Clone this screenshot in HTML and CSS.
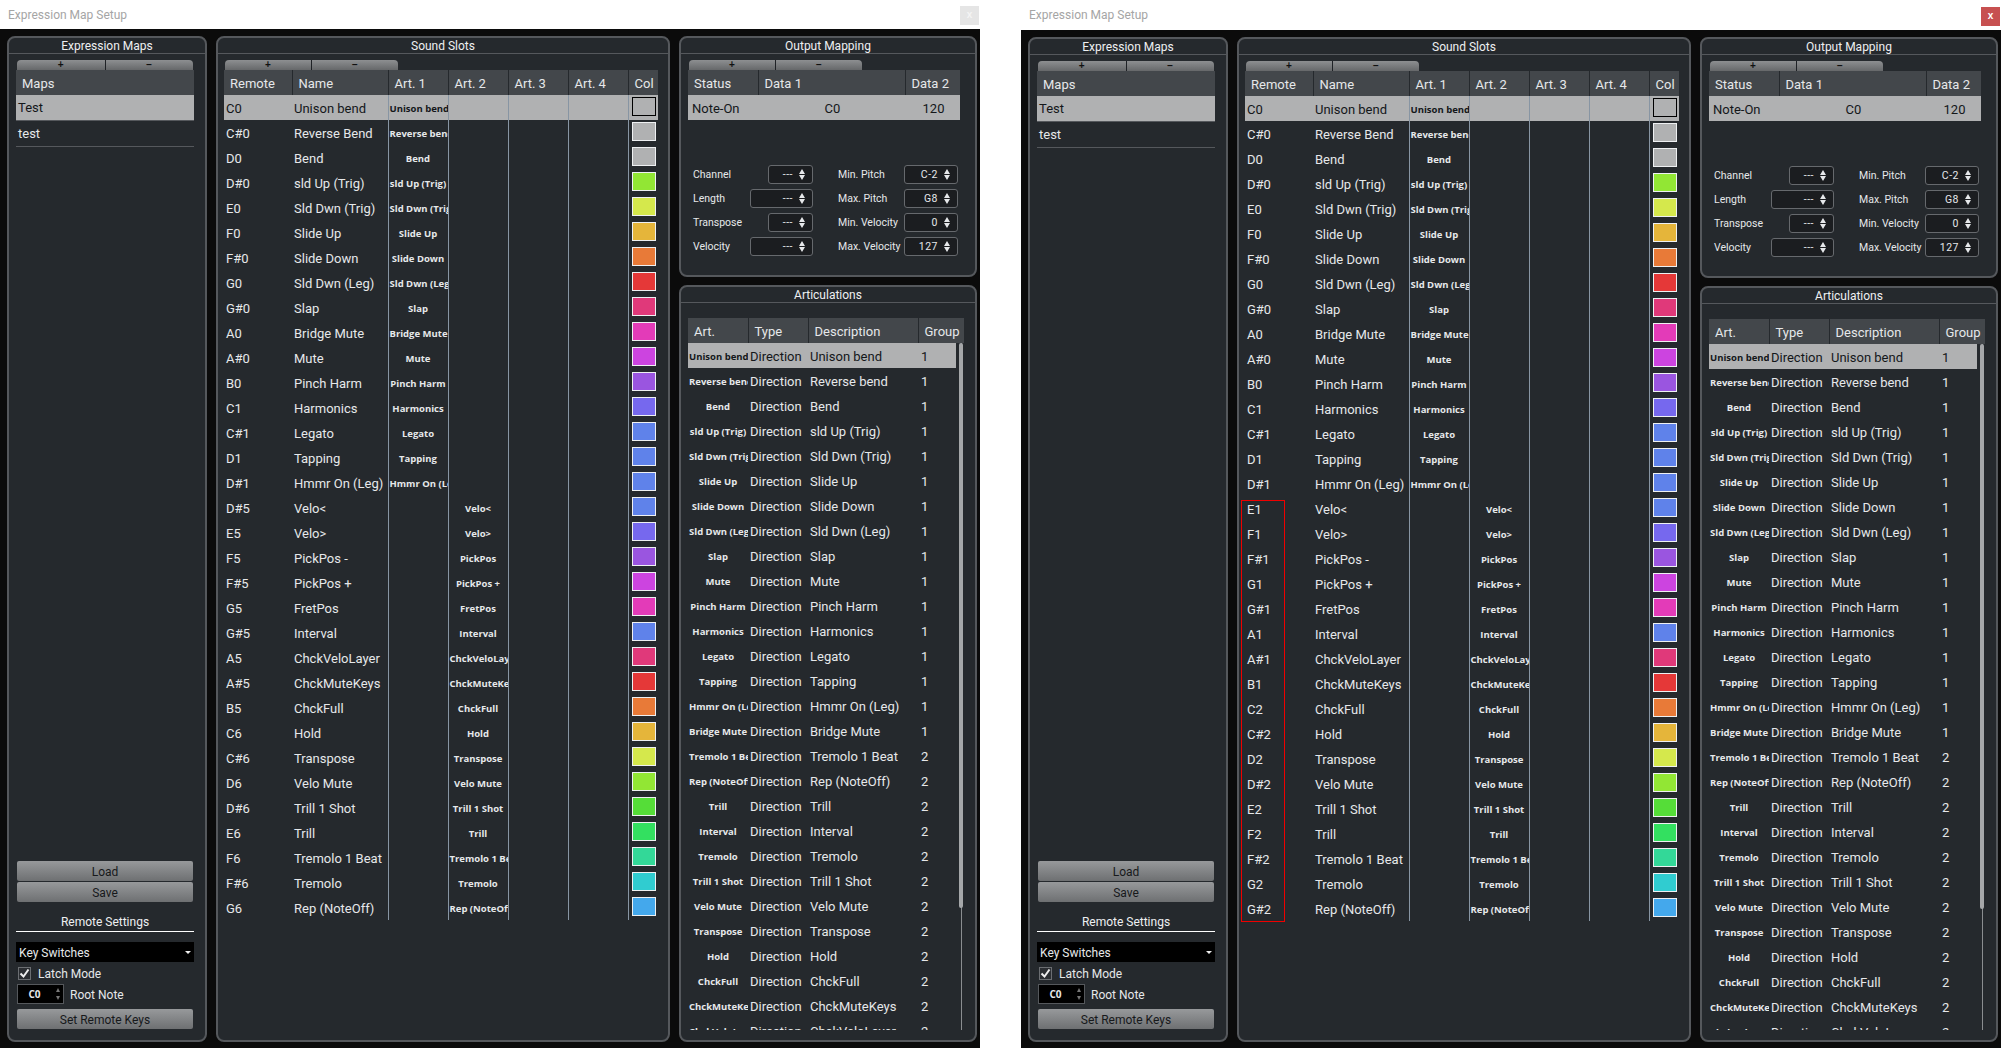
FILE: index.html
```html
<!DOCTYPE html>
<html lang="en">
<head>
<meta charset="utf-8">
<title>Expression Map Setup</title>
<link rel="stylesheet" href="styles.css">
</head>
<body>
<div class="desktop">
<section class="window">
<header class="titlebar"><span class="title">Expression Map Setup</span><span class="close">x</span></header>
<div class="client">
<section class="panel maps"><h2>Expression Maps</h2><div class="inner">
<div class="tools t-maps"><button>+</button><button>−</button></div>
<table class="grid"><colgroup><col></colgroup><thead><tr><th>Maps</th></tr></thead><tbody class="list"><tr class="sel"><td>Test</td></tr><tr><td>test</td></tr></tbody></table>
<div class="foot">
<button class="btn">Load</button><button class="btn">Save</button>
<h3>Remote Settings</h3>
<div class="select">Key Switches<i></i></div>
<label class="check"><svg width="13" height="13" viewBox="0 0 13 13"><rect x=".5" y=".5" width="12" height="12" fill="#2b2e32" stroke="#6b6e72"/><path d="M2.5 6.5l3 3 5-7" fill="none" stroke="#eee" stroke-width="2"/></svg>Latch Mode</label>
<div class="root"><span class="rootbox">C0<i></i></span>Root Note</div>
<button class="btn">Set Remote Keys</button>
</div></div></section>

<section class="panel slots"><h2>Sound Slots</h2><div class="inner">
<div class="tools t-slots"><button>+</button><button>−</button></div>
<table class="grid sound"><colgroup><col class="w68"><col class="w96"><col class="w60"><col class="w60"><col class="w60"><col class="w60"><col class="w30"></colgroup>
<thead><tr><th>Remote</th><th>Name</th><th>Art. 1</th><th>Art. 2</th><th>Art. 3</th><th>Art. 4</th><th>Col</th></tr></thead>
<tbody>
<tr class="sel"><td>C0<td>Unison bend<td class="a">Unison bend<td class="a"><td class="a"><td class="a"><td class="s"><i class="c0"></i>
<tr><td>C#0<td>Reverse Bend<td class="a">Reverse bend<td class="a"><td class="a"><td class="a"><td class="s"><i class="c0"></i>
<tr><td>D0<td>Bend<td class="a">Bend<td class="a"><td class="a"><td class="a"><td class="s"><i class="c0"></i>
<tr><td>D#0<td>sld Up (Trig)<td class="a">sld Up (Trig)<td class="a"><td class="a"><td class="a"><td class="s"><i class="c1"></i>
<tr><td>E0<td>Sld Dwn (Trig)<td class="a">Sld Dwn (Trig)<td class="a"><td class="a"><td class="a"><td class="s"><i class="c2"></i>
<tr><td>F0<td>Slide Up<td class="a">Slide Up<td class="a"><td class="a"><td class="a"><td class="s"><i class="c3"></i>
<tr><td>F#0<td>Slide Down<td class="a">Slide Down<td class="a"><td class="a"><td class="a"><td class="s"><i class="c4"></i>
<tr><td>G0<td>Sld Dwn (Leg)<td class="a">Sld Dwn (Leg)<td class="a"><td class="a"><td class="a"><td class="s"><i class="c5"></i>
<tr><td>G#0<td>Slap<td class="a">Slap<td class="a"><td class="a"><td class="a"><td class="s"><i class="c6"></i>
<tr><td>A0<td>Bridge Mute<td class="a">Bridge Mute<td class="a"><td class="a"><td class="a"><td class="s"><i class="c7"></i>
<tr><td>A#0<td>Mute<td class="a">Mute<td class="a"><td class="a"><td class="a"><td class="s"><i class="c8"></i>
<tr><td>B0<td>Pinch Harm<td class="a">Pinch Harm<td class="a"><td class="a"><td class="a"><td class="s"><i class="c9"></i>
<tr><td>C1<td>Harmonics<td class="a">Harmonics<td class="a"><td class="a"><td class="a"><td class="s"><i class="c10"></i>
<tr><td>C#1<td>Legato<td class="a">Legato<td class="a"><td class="a"><td class="a"><td class="s"><i class="c11"></i>
<tr><td>D1<td>Tapping<td class="a">Tapping<td class="a"><td class="a"><td class="a"><td class="s"><i class="c11"></i>
<tr><td>D#1<td>Hmmr On (Leg)<td class="a">Hmmr On (Leg)<td class="a"><td class="a"><td class="a"><td class="s"><i class="c11"></i>
<tr><td>D#5<td>Velo&lt;<td class="a"><td class="a">Velo&lt;<td class="a"><td class="a"><td class="s"><i class="c11"></i>
<tr><td>E5<td>Velo&gt;<td class="a"><td class="a">Velo&gt;<td class="a"><td class="a"><td class="s"><i class="c10"></i>
<tr><td>F5<td>PickPos -<td class="a"><td class="a">PickPos<td class="a"><td class="a"><td class="s"><i class="c9"></i>
<tr><td>F#5<td>PickPos +<td class="a"><td class="a">PickPos +<td class="a"><td class="a"><td class="s"><i class="c8"></i>
<tr><td>G5<td>FretPos<td class="a"><td class="a">FretPos<td class="a"><td class="a"><td class="s"><i class="c7"></i>
<tr><td>G#5<td>Interval<td class="a"><td class="a">Interval<td class="a"><td class="a"><td class="s"><i class="c11"></i>
<tr><td>A5<td>ChckVeloLayer<td class="a"><td class="a">ChckVeloLayer<td class="a"><td class="a"><td class="s"><i class="c6"></i>
<tr><td>A#5<td>ChckMuteKeys<td class="a"><td class="a">ChckMuteKeys<td class="a"><td class="a"><td class="s"><i class="c5"></i>
<tr><td>B5<td>ChckFull<td class="a"><td class="a">ChckFull<td class="a"><td class="a"><td class="s"><i class="c4"></i>
<tr><td>C6<td>Hold<td class="a"><td class="a">Hold<td class="a"><td class="a"><td class="s"><i class="c3"></i>
<tr><td>C#6<td>Transpose<td class="a"><td class="a">Transpose<td class="a"><td class="a"><td class="s"><i class="c2"></i>
<tr><td>D6<td>Velo Mute<td class="a"><td class="a">Velo Mute<td class="a"><td class="a"><td class="s"><i class="c1"></i>
<tr><td>D#6<td>Trill 1 Shot<td class="a"><td class="a">Trill 1 Shot<td class="a"><td class="a"><td class="s"><i class="c12"></i>
<tr><td>E6<td>Trill<td class="a"><td class="a">Trill<td class="a"><td class="a"><td class="s"><i class="c13"></i>
<tr><td>F6<td>Tremolo 1 Beat<td class="a"><td class="a">Tremolo 1 Beat<td class="a"><td class="a"><td class="s"><i class="c14"></i>
<tr><td>F#6<td>Tremolo<td class="a"><td class="a">Tremolo<td class="a"><td class="a"><td class="s"><i class="c15"></i>
<tr><td>G6<td>Rep (NoteOff)<td class="a"><td class="a">Rep (NoteOff)<td class="a"><td class="a"><td class="s"><i class="c16"></i>
</tbody></table>
</div></section>

<div class="rightcol">
<section class="panel output"><h2>Output Mapping</h2><div class="inner">
<div class="tools t-slots"><button>+</button><button>−</button></div>
<table class="grid"><colgroup><col class="w70"><col class="w147"><col class="w55"></colgroup><thead><tr><th>Status</th><th>Data 1</th><th>Data 2</th></tr></thead><tbody><tr class="sel"><td class="st">Note-On</td><td class="ctr">C0</td><td class="ctr">120</td></tr></tbody></table>
<div class="form">
<div class="field"><span>Channel</span><span class="spin w45">---<i></i></span></div><div class="field"><span>Min. Pitch</span><span class="spin w54">C-2<i></i></span></div>
<div class="field"><span>Length</span><span class="spin w63">---<i></i></span></div><div class="field"><span>Max. Pitch</span><span class="spin w54">G8<i></i></span></div>
<div class="field"><span>Transpose</span><span class="spin w45">---<i></i></span></div><div class="field"><span>Min. Velocity</span><span class="spin w54">0<i></i></span></div>
<div class="field"><span>Velocity</span><span class="spin w63">---<i></i></span></div><div class="field"><span>Max. Velocity</span><span class="spin w54">127<i></i></span></div>
</div></div></section>

<section class="panel artic"><h2>Articulations</h2><div class="inner">
<div class="clip">
<table class="grid arts"><colgroup><col class="w60"><col class="w60"><col class="w110"><col class="w46"></colgroup>
<thead><tr><th>Art.</th><th>Type</th><th>Description</th><th>Group</th></tr></thead>
<tbody>
<tr class="sel"><td class="a">Unison bend<td>Direction<td>Unison bend<td class="g">1
<tr><td class="a">Reverse bend<td>Direction<td>Reverse bend<td class="g">1
<tr><td class="a">Bend<td>Direction<td>Bend<td class="g">1
<tr><td class="a">sld Up (Trig)<td>Direction<td>sld Up (Trig)<td class="g">1
<tr><td class="a">Sld Dwn (Trig)<td>Direction<td>Sld Dwn (Trig)<td class="g">1
<tr><td class="a">Slide Up<td>Direction<td>Slide Up<td class="g">1
<tr><td class="a">Slide Down<td>Direction<td>Slide Down<td class="g">1
<tr><td class="a">Sld Dwn (Leg)<td>Direction<td>Sld Dwn (Leg)<td class="g">1
<tr><td class="a">Slap<td>Direction<td>Slap<td class="g">1
<tr><td class="a">Mute<td>Direction<td>Mute<td class="g">1
<tr><td class="a">Pinch Harm<td>Direction<td>Pinch Harm<td class="g">1
<tr><td class="a">Harmonics<td>Direction<td>Harmonics<td class="g">1
<tr><td class="a">Legato<td>Direction<td>Legato<td class="g">1
<tr><td class="a">Tapping<td>Direction<td>Tapping<td class="g">1
<tr><td class="a">Hmmr On (Leg)<td>Direction<td>Hmmr On (Leg)<td class="g">1
<tr><td class="a">Bridge Mute<td>Direction<td>Bridge Mute<td class="g">1
<tr><td class="a">Tremolo 1 Beat<td>Direction<td>Tremolo 1 Beat<td class="g">2
<tr><td class="a">Rep (NoteOff)<td>Direction<td>Rep (NoteOff)<td class="g">2
<tr><td class="a">Trill<td>Direction<td>Trill<td class="g">2
<tr><td class="a">Interval<td>Direction<td>Interval<td class="g">2
<tr><td class="a">Tremolo<td>Direction<td>Tremolo<td class="g">2
<tr><td class="a">Trill 1 Shot<td>Direction<td>Trill 1 Shot<td class="g">2
<tr><td class="a">Velo Mute<td>Direction<td>Velo Mute<td class="g">2
<tr><td class="a">Transpose<td>Direction<td>Transpose<td class="g">2
<tr><td class="a">Hold<td>Direction<td>Hold<td class="g">2
<tr><td class="a">ChckFull<td>Direction<td>ChckFull<td class="g">2
<tr><td class="a">ChckMuteKeys<td>Direction<td>ChckMuteKeys<td class="g">2
<tr><td class="a">ChckVeloLayer<td>Direction<td>ChckVeloLayer<td class="g">2
</tbody></table>
<div class="scroll"><b></b></div>
</div></div></section>
</div>
</div>
</section>

<section class="window second">
<header class="titlebar"><span class="title">Expression Map Setup</span><span class="close">x</span></header>
<div class="client">
<section class="panel maps"><h2>Expression Maps</h2><div class="inner">
<div class="tools t-maps"><button>+</button><button>−</button></div>
<table class="grid"><colgroup><col></colgroup><thead><tr><th>Maps</th></tr></thead><tbody class="list"><tr class="sel"><td>Test</td></tr><tr><td>test</td></tr></tbody></table>
<div class="foot">
<button class="btn">Load</button><button class="btn">Save</button>
<h3>Remote Settings</h3>
<div class="select">Key Switches<i></i></div>
<label class="check"><svg width="13" height="13" viewBox="0 0 13 13"><rect x=".5" y=".5" width="12" height="12" fill="#2b2e32" stroke="#6b6e72"/><path d="M2.5 6.5l3 3 5-7" fill="none" stroke="#eee" stroke-width="2"/></svg>Latch Mode</label>
<div class="root"><span class="rootbox">C0<i></i></span>Root Note</div>
<button class="btn">Set Remote Keys</button>
</div></div></section>

<section class="panel slots"><h2>Sound Slots</h2><div class="inner">
<div class="tools t-slots"><button>+</button><button>−</button></div>
<table class="grid sound"><colgroup><col class="w68"><col class="w96"><col class="w60"><col class="w60"><col class="w60"><col class="w60"><col class="w30"></colgroup>
<thead><tr><th>Remote</th><th>Name</th><th>Art. 1</th><th>Art. 2</th><th>Art. 3</th><th>Art. 4</th><th>Col</th></tr></thead>
<tbody>
<tr class="sel"><td>C0<td>Unison bend<td class="a">Unison bend<td class="a"><td class="a"><td class="a"><td class="s"><i class="c0"></i>
<tr><td>C#0<td>Reverse Bend<td class="a">Reverse bend<td class="a"><td class="a"><td class="a"><td class="s"><i class="c0"></i>
<tr><td>D0<td>Bend<td class="a">Bend<td class="a"><td class="a"><td class="a"><td class="s"><i class="c0"></i>
<tr><td>D#0<td>sld Up (Trig)<td class="a">sld Up (Trig)<td class="a"><td class="a"><td class="a"><td class="s"><i class="c1"></i>
<tr><td>E0<td>Sld Dwn (Trig)<td class="a">Sld Dwn (Trig)<td class="a"><td class="a"><td class="a"><td class="s"><i class="c2"></i>
<tr><td>F0<td>Slide Up<td class="a">Slide Up<td class="a"><td class="a"><td class="a"><td class="s"><i class="c3"></i>
<tr><td>F#0<td>Slide Down<td class="a">Slide Down<td class="a"><td class="a"><td class="a"><td class="s"><i class="c4"></i>
<tr><td>G0<td>Sld Dwn (Leg)<td class="a">Sld Dwn (Leg)<td class="a"><td class="a"><td class="a"><td class="s"><i class="c5"></i>
<tr><td>G#0<td>Slap<td class="a">Slap<td class="a"><td class="a"><td class="a"><td class="s"><i class="c6"></i>
<tr><td>A0<td>Bridge Mute<td class="a">Bridge Mute<td class="a"><td class="a"><td class="a"><td class="s"><i class="c7"></i>
<tr><td>A#0<td>Mute<td class="a">Mute<td class="a"><td class="a"><td class="a"><td class="s"><i class="c8"></i>
<tr><td>B0<td>Pinch Harm<td class="a">Pinch Harm<td class="a"><td class="a"><td class="a"><td class="s"><i class="c9"></i>
<tr><td>C1<td>Harmonics<td class="a">Harmonics<td class="a"><td class="a"><td class="a"><td class="s"><i class="c10"></i>
<tr><td>C#1<td>Legato<td class="a">Legato<td class="a"><td class="a"><td class="a"><td class="s"><i class="c11"></i>
<tr><td>D1<td>Tapping<td class="a">Tapping<td class="a"><td class="a"><td class="a"><td class="s"><i class="c11"></i>
<tr><td>D#1<td>Hmmr On (Leg)<td class="a">Hmmr On (Leg)<td class="a"><td class="a"><td class="a"><td class="s"><i class="c11"></i>
<tr><td>E1<td>Velo&lt;<td class="a"><td class="a">Velo&lt;<td class="a"><td class="a"><td class="s"><i class="c11"></i>
<tr><td>F1<td>Velo&gt;<td class="a"><td class="a">Velo&gt;<td class="a"><td class="a"><td class="s"><i class="c10"></i>
<tr><td>F#1<td>PickPos -<td class="a"><td class="a">PickPos<td class="a"><td class="a"><td class="s"><i class="c9"></i>
<tr><td>G1<td>PickPos +<td class="a"><td class="a">PickPos +<td class="a"><td class="a"><td class="s"><i class="c8"></i>
<tr><td>G#1<td>FretPos<td class="a"><td class="a">FretPos<td class="a"><td class="a"><td class="s"><i class="c7"></i>
<tr><td>A1<td>Interval<td class="a"><td class="a">Interval<td class="a"><td class="a"><td class="s"><i class="c11"></i>
<tr><td>A#1<td>ChckVeloLayer<td class="a"><td class="a">ChckVeloLayer<td class="a"><td class="a"><td class="s"><i class="c6"></i>
<tr><td>B1<td>ChckMuteKeys<td class="a"><td class="a">ChckMuteKeys<td class="a"><td class="a"><td class="s"><i class="c5"></i>
<tr><td>C2<td>ChckFull<td class="a"><td class="a">ChckFull<td class="a"><td class="a"><td class="s"><i class="c4"></i>
<tr><td>C#2<td>Hold<td class="a"><td class="a">Hold<td class="a"><td class="a"><td class="s"><i class="c3"></i>
<tr><td>D2<td>Transpose<td class="a"><td class="a">Transpose<td class="a"><td class="a"><td class="s"><i class="c2"></i>
<tr><td>D#2<td>Velo Mute<td class="a"><td class="a">Velo Mute<td class="a"><td class="a"><td class="s"><i class="c1"></i>
<tr><td>E2<td>Trill 1 Shot<td class="a"><td class="a">Trill 1 Shot<td class="a"><td class="a"><td class="s"><i class="c12"></i>
<tr><td>F2<td>Trill<td class="a"><td class="a">Trill<td class="a"><td class="a"><td class="s"><i class="c13"></i>
<tr><td>F#2<td>Tremolo 1 Beat<td class="a"><td class="a">Tremolo 1 Beat<td class="a"><td class="a"><td class="s"><i class="c14"></i>
<tr><td>G2<td>Tremolo<td class="a"><td class="a">Tremolo<td class="a"><td class="a"><td class="s"><i class="c15"></i>
<tr><td>G#2<td>Rep (NoteOff)<td class="a"><td class="a">Rep (NoteOff)<td class="a"><td class="a"><td class="s"><i class="c16"></i>
</tbody></table>
<div class="redbox"></div>
</div></section>

<div class="rightcol">
<section class="panel output"><h2>Output Mapping</h2><div class="inner">
<div class="tools t-slots"><button>+</button><button>−</button></div>
<table class="grid"><colgroup><col class="w70"><col class="w147"><col class="w55"></colgroup><thead><tr><th>Status</th><th>Data 1</th><th>Data 2</th></tr></thead><tbody><tr class="sel"><td class="st">Note-On</td><td class="ctr">C0</td><td class="ctr">120</td></tr></tbody></table>
<div class="form">
<div class="field"><span>Channel</span><span class="spin w45">---<i></i></span></div><div class="field"><span>Min. Pitch</span><span class="spin w54">C-2<i></i></span></div>
<div class="field"><span>Length</span><span class="spin w63">---<i></i></span></div><div class="field"><span>Max. Pitch</span><span class="spin w54">G8<i></i></span></div>
<div class="field"><span>Transpose</span><span class="spin w45">---<i></i></span></div><div class="field"><span>Min. Velocity</span><span class="spin w54">0<i></i></span></div>
<div class="field"><span>Velocity</span><span class="spin w63">---<i></i></span></div><div class="field"><span>Max. Velocity</span><span class="spin w54">127<i></i></span></div>
</div></div></section>

<section class="panel artic"><h2>Articulations</h2><div class="inner">
<div class="clip">
<table class="grid arts"><colgroup><col class="w60"><col class="w60"><col class="w110"><col class="w46"></colgroup>
<thead><tr><th>Art.</th><th>Type</th><th>Description</th><th>Group</th></tr></thead>
<tbody>
<tr class="sel"><td class="a">Unison bend<td>Direction<td>Unison bend<td class="g">1
<tr><td class="a">Reverse bend<td>Direction<td>Reverse bend<td class="g">1
<tr><td class="a">Bend<td>Direction<td>Bend<td class="g">1
<tr><td class="a">sld Up (Trig)<td>Direction<td>sld Up (Trig)<td class="g">1
<tr><td class="a">Sld Dwn (Trig)<td>Direction<td>Sld Dwn (Trig)<td class="g">1
<tr><td class="a">Slide Up<td>Direction<td>Slide Up<td class="g">1
<tr><td class="a">Slide Down<td>Direction<td>Slide Down<td class="g">1
<tr><td class="a">Sld Dwn (Leg)<td>Direction<td>Sld Dwn (Leg)<td class="g">1
<tr><td class="a">Slap<td>Direction<td>Slap<td class="g">1
<tr><td class="a">Mute<td>Direction<td>Mute<td class="g">1
<tr><td class="a">Pinch Harm<td>Direction<td>Pinch Harm<td class="g">1
<tr><td class="a">Harmonics<td>Direction<td>Harmonics<td class="g">1
<tr><td class="a">Legato<td>Direction<td>Legato<td class="g">1
<tr><td class="a">Tapping<td>Direction<td>Tapping<td class="g">1
<tr><td class="a">Hmmr On (Leg)<td>Direction<td>Hmmr On (Leg)<td class="g">1
<tr><td class="a">Bridge Mute<td>Direction<td>Bridge Mute<td class="g">1
<tr><td class="a">Tremolo 1 Beat<td>Direction<td>Tremolo 1 Beat<td class="g">2
<tr><td class="a">Rep (NoteOff)<td>Direction<td>Rep (NoteOff)<td class="g">2
<tr><td class="a">Trill<td>Direction<td>Trill<td class="g">2
<tr><td class="a">Interval<td>Direction<td>Interval<td class="g">2
<tr><td class="a">Tremolo<td>Direction<td>Tremolo<td class="g">2
<tr><td class="a">Trill 1 Shot<td>Direction<td>Trill 1 Shot<td class="g">2
<tr><td class="a">Velo Mute<td>Direction<td>Velo Mute<td class="g">2
<tr><td class="a">Transpose<td>Direction<td>Transpose<td class="g">2
<tr><td class="a">Hold<td>Direction<td>Hold<td class="g">2
<tr><td class="a">ChckFull<td>Direction<td>ChckFull<td class="g">2
<tr><td class="a">ChckMuteKeys<td>Direction<td>ChckMuteKeys<td class="g">2
<tr><td class="a">ChckVeloLayer<td>Direction<td>ChckVeloLayer<td class="g">2
</tbody></table>
<div class="scroll"><b></b></div>
</div></div></section>
</div>
</div>
</section>
</div>
</body>
</html>
```
FILE: styles.css
```css
* { box-sizing: border-box; }
html, body { margin: 0; height: 100%; overflow: hidden; }
body { background: #fff; font: 13px/25px Roboto, "Open Sans", sans-serif; color: #e6e8ea; }
.desktop { display: flex; gap: 41px; height: 1048px; width: 2001px; }
.window { width: 980px; height: 1048px; display: flex; flex-direction: column; }
.titlebar { height: 29px; flex: none; display: flex; align-items: center; justify-content: space-between; padding: 0 1px 0 8px; background: #fff; }
.title { color: #a5a5a5; font-size: 12px; line-height: 28px; }
.close { align-self: flex-start; margin-top: 6px; width: 19px; height: 19px; background: #e5e5e5; color: #f4f4f4; font: bold 10px/17px "Liberation Sans", sans-serif; text-align: center; }
.second .titlebar { height: 30px; }
.second .close { margin-top: 7px; background: #c75050; color: #fff; }
.client { flex: 1; min-height: 0; background: #0b0b0b; padding: 7px 3px 6px 7px; display: flex; gap: 9px; }
.rightcol { width: 298px; display: flex; flex-direction: column; gap: 8px; }

.panel { position: relative; background: #25292d; border: 2px solid #55585c; border-radius: 8px; display: flex; flex-direction: column; min-height: 0; }
.panel h2 { margin: 0; height: 16px; flex: none; border-bottom: 1px solid #55585c; font: 400 12px/16px Roboto, sans-serif; color: #eef0f2; text-align: center; }
.inner { flex: 1; min-height: 0; display: flex; flex-direction: column; padding: 6px 10px 11px 6px; }
.maps { width: 200px; }
.maps .inner { padding-left: 7px; padding-right: 11px; }
.slots { width: 454px; }
.output { height: 241px; flex: none; }
.output .inner { padding-left: 7px; padding-right: 15px; }
.artic { flex: 1; }
.artic .inner { padding: 15px 11px 10px 7px; }

.tools { display: flex; height: 10px; flex: none; margin: 0 1px; }
.t-maps { width: 176px; }
.t-slots { width: 173px; }
.tools button { flex: 1; padding: 0; height: 10px; border: 0; border-left: 1px solid #1f2226; background: linear-gradient(#8d8f91, #66686a); color: #111; font: bold 10px/10px "Liberation Sans", sans-serif; }
.tools button:first-child { border-left: 0; border-radius: 4px 0 0 0; }
.tools button:last-child { border-radius: 0 4px 0 0; }

.grid { table-layout: fixed; border-collapse: collapse; width: 100%; flex: none; }
.grid th { height: 25px; padding: 2px 0 0 6px; background: #43474b; border-left: 1px solid #25292d; font: 400 13px/23px Roboto, sans-serif; color: #e6e8ea; text-align: left; white-space: nowrap; overflow: hidden; }
.grid th:first-child { border-left: 0; }
.grid td { height: 25px; padding: 2px 0 0 2px; line-height: 23px; white-space: nowrap; overflow: hidden; }
.grid .sel td { background: #b0b1b2; color: #14171a; }
.list td { border-bottom: 1px solid #55585c; }
.grid .list td { padding-top: 0; line-height: 25px; }
.sound td.a { border-right: 1px solid #8795a3; }
.sound td:nth-child(3) { border-left: 1px solid #8795a3; }
.grid td.a { font: bold 9.5px/23px "Open Sans", sans-serif; text-align: center; padding: 2px 1px 0; }
.grid td.ctr { text-align: center; }
.grid td.st { padding-left: 4px; }
.arts td.g { padding-left: 3px; }
.sound td.s { padding: 0 0 0 3px; }
.s i { display: block; width: 24px; height: 19px; margin-bottom: 3px; border: 1px solid #eef0f2; }
.sel .s i { border-color: #000; }
.w68 { width: 68px; } .w96 { width: 96px; } .w60 { width: 60px; } .w30 { width: 30px; }
.w70 { width: 70px; } .w147 { width: 147px; } .w55 { width: 55px; } .w110 { width: 110px; } .w46 { width: 46px; }

.c0 { background: #b0b1b2; } .c1 { background: #92e634; } .c2 { background: #d5e84c; } .c3 { background: #e5b53a; }
.c4 { background: #e87a38; } .c5 { background: #e53838; } .c6 { background: #e0397a; } .c7 { background: #e33bb8; }
.c8 { background: #cc44e0; } .c9 { background: #9a55e0; } .c10 { background: #7668ee; } .c11 { background: #5f82ea; }
.c12 { background: #55dd38; } .c13 { background: #33e060; } .c14 { background: #33d898; } .c15 { background: #30ccd0; } .c16 { background: #44a8ec; }

.form { display: grid; grid-template-columns: 120px 120px; column-gap: 25px; row-gap: 5px; margin: 45px 0 0 5px; font-size: 10.5px; }
.field { display: flex; justify-content: space-between; align-items: center; height: 19px; line-height: 19px; white-space: nowrap; }
.spin { display: block; position: relative; height: 19px; padding-right: 19px; border: 1px solid #66696d; border-radius: 3px; background: #1b1d20; text-align: right; line-height: 17px; letter-spacing: .5px; }
.w45 { width: 45px; } .w54 { width: 54px; } .w63 { width: 63px; }
.spin i { position: absolute; right: 6px; top: 3px; width: 7px; height: 11px; }
.spin i::before, .spin i::after { content: ""; position: absolute; left: 0; border-left: 3.5px solid transparent; border-right: 3.5px solid transparent; }
.spin i::before { top: 0; border-bottom: 5px solid #e6e8ea; }
.spin i::after { bottom: 0; border-top: 5px solid #e6e8ea; }

.foot { margin-top: auto; display: flex; flex-direction: column; }
.btn { height: 20px; margin: 0 1px; padding: 3px 0 0; border: 0; border-radius: 2px; background: linear-gradient(#97999b, #6e7072); color: #17191b; font: 400 12px/17px Roboto, sans-serif; }
.btn + .btn { margin-top: 1px; }
.foot h3 { margin: 9px 0 10px; padding-top: 3px; height: 21px; border-bottom: 1px solid #fff; font: 400 12px/16px Roboto, sans-serif; color: #eef0f2; text-align: center; }
.select { position: relative; height: 20px; background: #000; padding: 2px 0 0 3px; font-size: 12px; line-height: 18px; }
.select i { position: absolute; right: 3px; top: 9px; border-left: 3px solid transparent; border-right: 3px solid transparent; border-top: 3px solid #eee; }
.check { display: flex; align-items: center; gap: 7px; height: 21px; padding: 2px 0 0 2px; font-size: 12px; line-height: 19px; margin-top: 1px; }
.check svg { margin-top: -2px; }
.root { display: flex; align-items: center; gap: 6px; height: 20px; padding: 2px 0 0 1px; font-size: 12px; line-height: 18px; margin-bottom: 5px; }
.rootbox { position: relative; width: 47px; height: 20px; margin-top: -2px; padding-right: 12px; background: #000; border: 1px solid #55585c; font: bold 10px/18px "Open Sans", sans-serif; text-align: center; }
.rootbox i { position: absolute; right: 1px; top: 3px; width: 7px; height: 12px; }
.rootbox i::before, .rootbox i::after { content: ""; position: absolute; left: 1px; border-left: 2.5px solid transparent; border-right: 2.5px solid transparent; }
.rootbox i::before { top: 0; border-bottom: 4px solid #777; }
.rootbox i::after { bottom: 0; border-top: 4px solid #777; }

.clip { position: relative; height: 712px; overflow: hidden; }
.arts { width: 276px; }
.arts tbody .sel td:last-child { background: linear-gradient(90deg, #b0b1b2 38px, #25292d 38px); }
.scroll { position: absolute; left: 273px; top: 25px; bottom: 0; width: 1px; background: #8a8d90; }
.scroll b { position: absolute; left: -2px; top: 0; width: 4px; height: 565px; border-radius: 2px; background: #a5a7a9; }
.redbox { position: absolute; left: 2px; top: 461px; width: 44px; height: 422px; border: 1px solid #f00000; }
```
